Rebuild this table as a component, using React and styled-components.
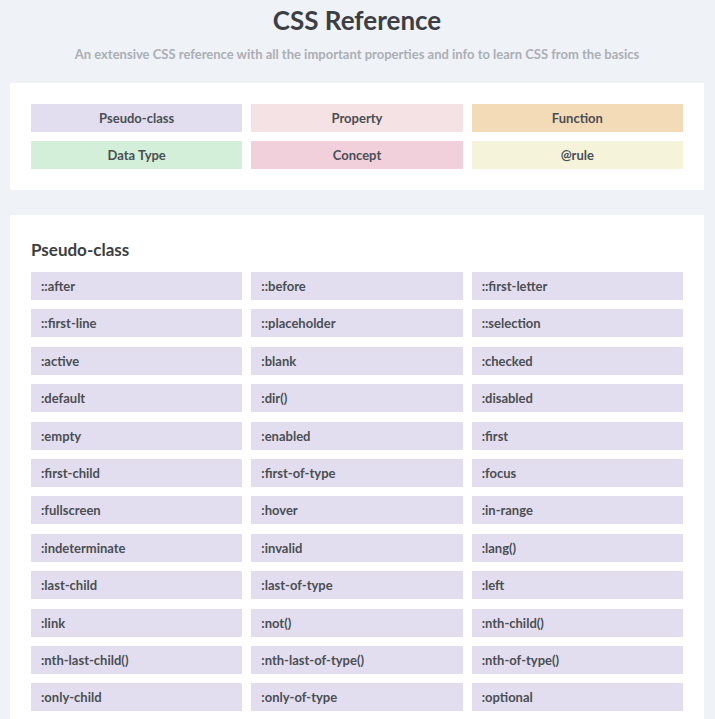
import styled, { createGlobalStyle } from "styled-components";

const GlobalStyle = createGlobalStyle`
  body {
    margin: 0;
    background: #eff2f7;
    font-family: Lato, "Open Sans", sans-serif;
  }
`;

const legend = [
  { label: "Pseudo-class", color: "#e2deef" },
  { label: "Property", color: "#f5e2e4" },
  { label: "Function", color: "#f4dbb7" },
  { label: "Data Type", color: "#d3eed9" },
  { label: "Concept", color: "#f1d0dc" },
  { label: "@rule", color: "#f5f4db" },
];

const pseudoClasses = [
  "::after", "::before", "::first-letter",
  "::first-line", "::placeholder", "::selection",
  ":active", ":blank", ":checked",
  ":default", ":dir()", ":disabled",
  ":empty", ":enabled", ":first",
  ":first-child", ":first-of-type", ":focus",
  ":fullscreen", ":hover", ":in-range",
  ":indeterminate", ":invalid", ":lang()",
  ":last-child", ":last-of-type", ":left",
  ":link", ":not()", ":nth-child()",
  ":nth-last-child()", ":nth-last-of-type()", ":nth-of-type()",
  ":only-child", ":only-of-type", ":optional",
];

function App() {
  return (
    <Page>
      <GlobalStyle />
      <Header>
        <Title>CSS Reference</Title>
        <Subtitle>
          An extensive CSS reference with all the important properties and info
          to learn CSS from the basics
        </Subtitle>
      </Header>

      <Card>
        <Grid>
          {legend.map((item) => (
            <LegendTile key={item.label} $bg={item.color}>
              {item.label}
            </LegendTile>
          ))}
        </Grid>
      </Card>

      <Card $top>
        <SectionTitle>Pseudo-class</SectionTitle>
        <Grid $rowGap="9.4px">
          {pseudoClasses.map((name) => (
            <Tile key={name} $bg="#e2deef">
              {name}
            </Tile>
          ))}
        </Grid>
      </Card>
    </Page>
  );
}

const Page = styled.div`
  padding: 0 11px 40px 10px;
  display: flex;
  flex-direction: column;
  gap: 25px;
`;

const Header = styled.header`
  text-align: center;
  padding-top: 4px;
  margin-bottom: -4px;
`;

const Title = styled.h1`
  margin: 0;
  font-size: 26px;
  line-height: 32px;
  font-weight: 700;
  color: #3b3f44;
`;

const Subtitle = styled.p`
  margin: 10px 0 0;
  font-size: 13px;
  line-height: 16px;
  font-weight: 700;
  color: #abafb4;
`;

const Card = styled.section`
  background: #fff;
  padding: ${(p) => (p.$top ? "24px 21px 21px" : "21px")};
`;

const Grid = styled.div`
  display: grid;
  grid-template-columns: repeat(3, 1fr);
  column-gap: 9px;
  row-gap: ${(p) => p.$rowGap || "9px"};
`;

const LegendTile = styled.div`
  height: 28px;
  display: flex;
  align-items: center;
  justify-content: center;
  background: ${(p) => p.$bg};
  font-size: 13px;
  font-weight: 700;
  color: #4a4e53;
`;

const Tile = styled.div`
  height: 28px;
  display: flex;
  align-items: center;
  padding-left: 10px;
  background: ${(p) => p.$bg};
  font-size: 13px;
  font-weight: 700;
  color: #4a4e53;
`;

const SectionTitle = styled.h2`
  margin: 0 0 11px;
  font-size: 17px;
  line-height: 22px;
  font-weight: 700;
  color: #3b3f44;
`;

export default App;
